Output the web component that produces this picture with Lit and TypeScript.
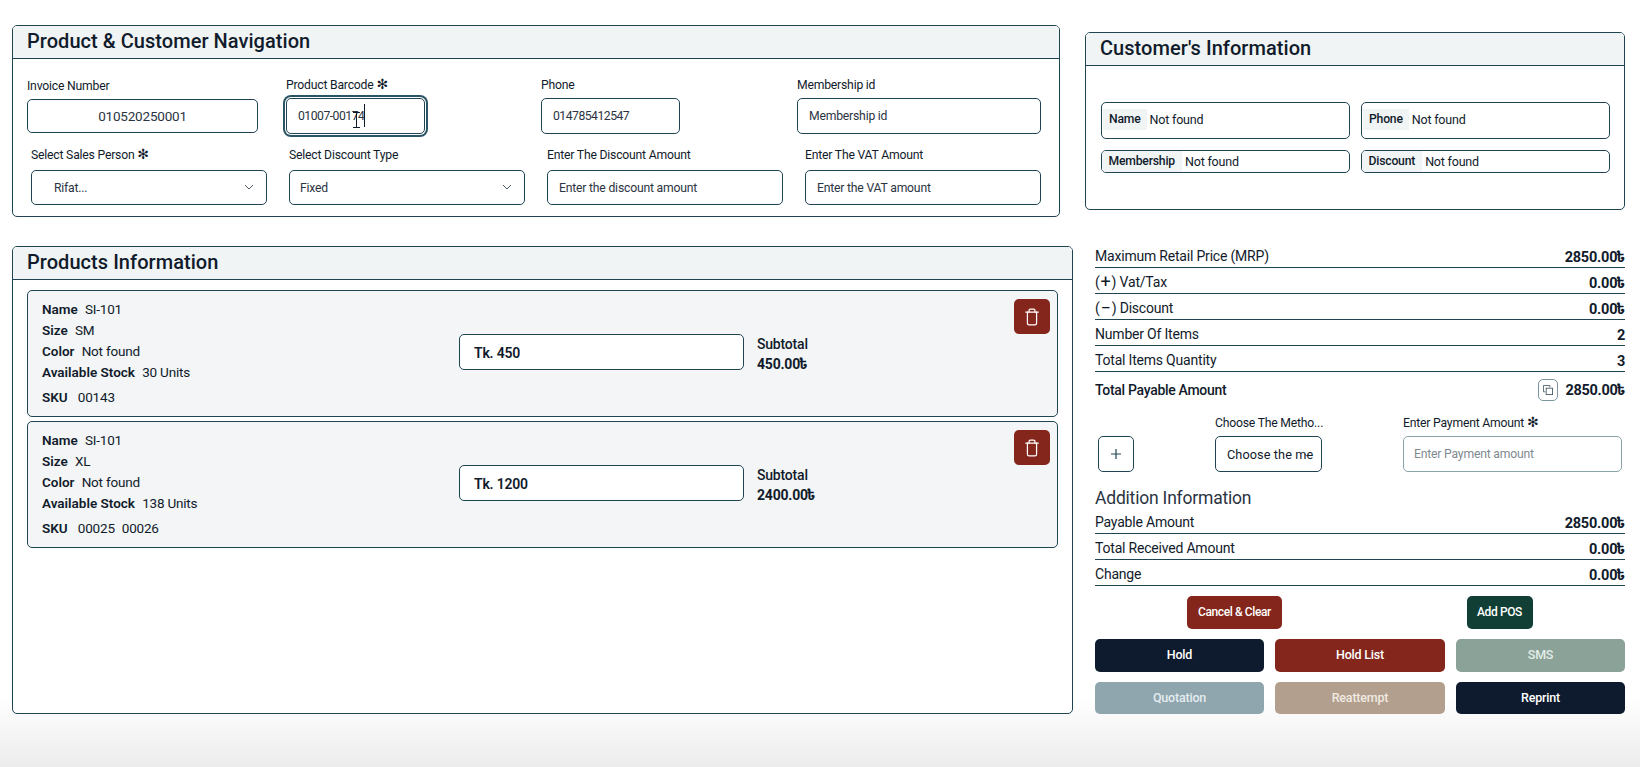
import { LitElement, html, css } from 'lit';
import { customElement } from 'lit/decorators.js';

const TAKA = '৳';

const summaryRows = [
  { label: html`Maximum Retail Price (MRP)`, value: '2850.00', money: true },
  { label: html`<span class="sign">(<b>+</b>)</span> Vat/Tax`, value: '0.00', money: true },
  { label: html`<span class="sign">(<b>−</b>)</span> Discount`, value: '0.00', money: true },
  { label: html`Number Of Items`, value: '2', money: false },
  { label: html`Total Items Quantity`, value: '3', money: false },
];

const additionRows = [
  { label: 'Payable Amount', value: '2850.00' },
  { label: 'Total Received Amount', value: '0.00' },
  { label: 'Change', value: '0.00' },
];

const products = [
  { size: 'SM', stock: '30 Units', sku: ['00143'], price: 'Tk. 450', subtotal: '450.00' },
  { size: 'XL', stock: '138 Units', sku: ['00025', '00026'], price: 'Tk. 1200', subtotal: '2400.00' },
];

@customElement('app-root')
export class AppRoot extends LitElement {
  static styles = css`
    :host {
      background: linear-gradient(to bottom, #ffffff 91%, #ececec 100%);
      box-sizing: border-box;
      color: #111b2b;
      display: flex;
      font-family: Roboto, 'Noto Sans', sans-serif;
      font-size: 13px;
      height: 767px;
      letter-spacing: -0.2px;
      overflow: hidden;
      padding: 25px 15px 0 12px;
    }

    * {
      box-sizing: border-box;
    }

    input,
    select,
    button {
      font: inherit;
      letter-spacing: inherit;
    }

    .left {
      display: flex;
      flex-direction: column;
      gap: 29px;
      width: 1061px;
    }

    .right {
      display: flex;
      flex-direction: column;
      margin-left: 12px;
      padding-top: 7px;
      width: 540px;
    }

    .panel {
      background: #ffffff;
      border: 1px solid #1f4553;
      border-radius: 5px;
      overflow: hidden;
    }

    .panel h2 {
      background: #f0f4f5;
      border-bottom: 1px solid #1f4553;
      font-size: 20px;
      font-weight: 500;
      height: 33px;
      letter-spacing: 0.05px;
      line-height: 30px;
      margin: 0;
      padding-left: 14px;
    }

    .nav {
      width: 1048px;
    }

    .nav-body {
      padding: 18px 17px 11px 14px;
    }

    .row-top {
      display: grid;
      gap: 14px;
      grid-template-columns: 243px 243px 242px 244px;
    }

    .row-bottom {
      display: grid;
      gap: 22px;
      grid-template-columns: repeat(4, 236px);
      margin-top: 13px;
      padding-left: 4px;
    }

    .field label {
      display: block;
      font-size: 12.2px;
      height: 16px;
      line-height: 16px;
      white-space: nowrap;
    }

    .row-top .field input {
      height: 36px;
      margin-top: 5px;
    }

    .row-bottom .field input,
    .row-bottom .select-wrap {
      height: 35px;
      margin-top: 7px;
    }

    .star {
      font-family: 'DejaVu Sans', sans-serif;
      font-size: 14px;
      font-weight: 700;
      line-height: 0;
    }

    input {
      background: #ffffff;
      border: 1px solid #1f4553;
      border-radius: 5px;
      color: #2b3442;
      display: block;
      font-size: 12.2px;
      outline: none;
      padding: 0 11px;
      width: 100%;
    }

    input::placeholder {
      color: #2b3442;
      opacity: 1;
    }

    .invoice {
      padding-top: 1px;
    }

    .invoice input {
      font-size: 13.5px;
      height: 34px !important;
      text-align: center;
      width: 231px;
    }

    .barcode {
      padding-left: 2px;
      position: relative;
    }

    .barcode input {
      box-shadow: 0 0 0 1px #ffffff, 0 0 0 3px #2a5566;
      letter-spacing: -0.5px;
      width: 139px;
    }

    .caret {
      background: #111b2b;
      height: 23px;
      left: 80px;
      position: absolute;
      top: 27px;
      width: 1px;
    }

    .ibeam {
      height: 16px;
      left: 68px;
      position: absolute;
      top: 35px;
      width: 9px;
    }

    .phone input {
      letter-spacing: -0.5px;
      width: 139px;
    }

    .select-wrap {
      position: relative;
    }

    select {
      appearance: none;
      background: #ffffff;
      border: 1px solid #1f4553;
      border-radius: 5px;
      color: #2b3442;
      display: block;
      font-size: 12.2px;
      height: 100%;
      outline: none;
      padding: 0 10px;
      width: 100%;
    }

    select.indented {
      padding-left: 22px;
    }

    .chevron {
      height: 10px;
      position: absolute;
      right: 13px;
      top: 12px;
      width: 10px;
    }

    .products {
      height: 468px;
      padding-bottom: 0;
    }

    .product-list {
      display: flex;
      flex-direction: column;
      gap: 4px;
      padding: 10px 14px 0;
    }

    .product {
      align-items: center;
      background: #f3f5f6;
      border: 1px solid #1f4553;
      border-radius: 5px;
      display: flex;
      height: 127px;
      padding: 8px 7px 0 14px;
    }

    .product-info {
      align-self: flex-start;
      flex: none;
      font-size: 13.5px;
      width: 417px;
    }

    .product-info div {
      height: 21px;
      line-height: 21px;
      white-space: nowrap;
    }

    .product-info b {
      font-weight: 600;
      letter-spacing: 0;
      margin-right: 4px;
    }

    .product-info .sku {
      margin-top: 4px;
    }

    .sku span {
      margin-left: 3px;
      margin-right: 4px;
    }

    .price {
      color: #111b2b;
      flex: none;
      font-size: 14px;
      font-weight: 600;
      height: 36px;
      margin-top: -11px;
      padding: 2px 14px 0;
      width: 285px;
    }

    .subtotal {
      flex: 1;
      font-size: 14px;
      font-weight: 500;
      line-height: 20px;
      margin-left: 13px;
      margin-top: -8px;
    }

    .subtotal b {
      display: block;
      font-weight: 700;
    }

    .taka {
      font-family: 'Noto Sans Bengali', 'Noto Sans', 'DejaVu Sans', sans-serif;
      line-height: 0;
      margin-left: -1px;
    }

    .delete {
      align-items: center;
      align-self: flex-start;
      background: #84261c;
      border: none;
      border-radius: 5px;
      display: flex;
      height: 35px;
      justify-content: center;
      margin-top: 0;
      padding: 0;
      width: 36px;
    }

    .delete svg {
      height: 20px;
      width: 20px;
    }

    .customer {
      width: 540px;
    }

    .customer-body {
      display: grid;
      gap: 11px;
      grid-template-columns: 249px 249px;
      grid-template-rows: 37px 23px;
      padding: 36px 14px 36px 15px;
    }

    .info-box {
      align-items: flex-start;
      border: 1px solid #1f4553;
      border-radius: 5px;
      display: flex;
      font-size: 12.5px;
      overflow: hidden;
    }

    .info-box span {
      line-height: 21px;
    }

    .info-box .chip {
      background: #f0f4f5;
      font-size: 12.2px;
      font-weight: 500;
      margin-left: 1px;
      margin-right: 3px;
      margin-top: 6px;
      padding: 0 6px;
    }

    .info-box.flat .chip {
      margin: 0 3px 0 0;
      padding: 0 7px 0 6.5px;
    }

    .info-box .value {
      margin-top: 6px;
    }

    .info-box.flat .value {
      margin-top: 0;
    }

    .summary {
      margin-left: 10px;
      margin-top: 32px;
      width: 530px;
    }

    .stat {
      align-items: center;
      border-bottom: 1px solid #1f4553;
      display: flex;
      font-size: 14px;
      height: 26px;
      justify-content: space-between;
      line-height: 20px;
      padding-top: 3px;
    }

    .stat strong,
    .total strong {
      font-size: 14.5px;
      font-weight: 700;
      line-height: 20px;
    }

    .stat strong {
      margin-top: 4px;
    }

    .total strong {
      margin-top: 2px;
    }

    .sign b {
      font-size: 18px;
      font-weight: 400;
      line-height: 0;
      margin: 0 1px;
      vertical-align: -1px;
    }

    .total {
      align-items: center;
      display: flex;
      font-size: 14px;
      font-weight: 500;
      height: 22px;
      letter-spacing: -0.3px;
      margin-top: 7px;
    }

    .total span:first-child {
      flex: 1;
    }

    .copy {
      align-items: center;
      background: #ffffff;
      border: 1px solid #7d959e;
      border-radius: 5px;
      display: flex;
      height: 22px;
      justify-content: center;
      margin-right: 7px;
      padding: 0;
      width: 20px;
    }

    .copy svg {
      height: 10px;
      width: 10px;
    }

    .payment {
      align-items: end;
      display: grid;
      grid-template-columns: 117px 188px 1fr;
      margin-top: 14px;
      padding: 0 3px;
    }

    .plus {
      align-items: center;
      background: #ffffff;
      border: 1px solid #1f4553;
      border-radius: 5px;
      display: flex;
      height: 36px;
      justify-content: center;
      padding: 0;
      width: 36px;
    }

    .plus svg {
      height: 12px;
      width: 12px;
    }

    .payment label {
      display: block;
      font-size: 12.2px;
      height: 16px;
      line-height: 16px;
      margin-bottom: 5px;
      white-space: nowrap;
    }

    .method {
      height: 36px;
      position: relative;
      width: 107px;
    }

    .method select {
      color: #111b2b;
      font-size: 12.7px;
      letter-spacing: 0.1px;
      padding: 0 4px 0 11px;
    }

    .method svg {
      height: 4px;
      position: absolute;
      right: 13px;
      top: 17px;
      width: 5px;
    }

    .payment input {
      border-color: #8aa3a9;
      height: 36px;
      padding: 0 10px;
    }

    .payment input::placeholder {
      color: #7f8a90;
    }

    h3 {
      color: #2b3442;
      font-size: 17.5px;
      font-weight: 400;
      height: 20px;
      line-height: 20px;
      margin: 16px 0 0;
    }

    .actions {
      display: grid;
      grid-template-columns: 279px 251px;
      justify-items: center;
      margin-top: 10px;
    }

    button.solid {
      border: none;
      border-radius: 5px;
      color: #ffffff;
      font-size: 12.5px;
      font-weight: 500;
      padding: 0 0 2px;
    }

    .actions button {
      font-size: 12px !important;
      height: 33px;
      letter-spacing: -0.4px;
    }

    .cancel {
      width: 95px;
    }

    .add-pos {
      width: 66px;
    }

    .grid-buttons {
      display: grid;
      gap: 10px 11px;
      grid-template-columns: 169px 170px 169px;
      grid-template-rows: 33px 32px;
      margin-top: 10px;
    }

    .navy {
      background: #0e1a2d;
    }

    .red {
      background: #84261c;
    }

    .green {
      background: #123f35;
    }

    .sage {
      background: #8aa298;
      color: #e4ece8 !important;
    }

    .slate {
      background: #8fa6ae;
      color: #e4ecef !important;
    }

    .sand {
      background: #b29f8d;
      color: #f0e9e2 !important;
    }
  `;

  money(value: string) {
    return html`${value}<span class="taka">${TAKA}</span>`;
  }

  chevron() {
    return html`<svg class="chevron" viewBox="0 0 10 10" fill="none" stroke="#4a5a66" stroke-width="1">
      <path d="M1 3l4 4 4-4" />
    </svg>`;
  }

  buildProducts() {
    return products.map(
      item => html`<div class="product">
        <div class="product-info">
          <div><b>Name</b> SI-101</div>
          <div><b>Size</b> ${item.size}</div>
          <div><b>Color</b> Not found</div>
          <div><b>Available Stock</b> ${item.stock}</div>
          <div class="sku"><b>SKU</b> ${item.sku.map(code => html`<span>${code}</span>`)}</div>
        </div>
        <input class="price" .value=${item.price} />
        <div class="subtotal">Subtotal<b>${this.money(item.subtotal)}</b></div>
        <button class="delete" aria-label="Delete">
          <svg viewBox="0 0 24 24" fill="none" stroke="#ffffff" stroke-width="1.5" stroke-linecap="round" stroke-linejoin="round">
            <path d="M4.5 6h15" />
            <path d="M8.5 6V4a1.5 1.5 0 0 1 1.5-1.5h4A1.5 1.5 0 0 1 15.5 4v2" />
            <path d="M6.5 6v13.5a2 2 0 0 0 2 2h7a2 2 0 0 0 2-2V6" />
          </svg>
        </button>
      </div>`
    );
  }

  render() {
    return html`
      <div class="left">
        <section class="panel nav">
          <h2>Product &amp; Customer Navigation</h2>
          <div class="nav-body">
            <div class="row-top">
              <div class="field invoice">
                <label>Invoice Number</label>
                <input .value=${'010520250001'} />
              </div>
              <div class="field barcode">
                <label>Product Barcode <span class="star">✻</span></label>
                <input .value=${'01007-00174'} />
                <span class="caret"></span>
                <svg class="ibeam" viewBox="0 0 9 16" fill="none" stroke="#111b2b" stroke-width="1">
                  <path d="M1 .5h7M4.5.5v15M1 15.5h7" />
                </svg>
              </div>
              <div class="field phone">
                <label>Phone</label>
                <input .value=${'014785412547'} />
              </div>
              <div class="field">
                <label>Membership id</label>
                <input placeholder="Membership id" />
              </div>
            </div>
            <div class="row-bottom">
              <div class="field">
                <label>Select Sales Person <span class="star">✻</span></label>
                <div class="select-wrap">
                  <select class="indented"><option>Rifat...</option></select>
                  ${this.chevron()}
                </div>
              </div>
              <div class="field">
                <label>Select Discount Type</label>
                <div class="select-wrap">
                  <select><option>Fixed</option></select>
                  ${this.chevron()}
                </div>
              </div>
              <div class="field">
                <label>Enter The Discount Amount</label>
                <input placeholder="Enter the discount amount" />
              </div>
              <div class="field">
                <label>Enter The VAT Amount</label>
                <input placeholder="Enter the VAT amount" />
              </div>
            </div>
          </div>
        </section>

        <section class="panel products">
          <h2>Products Information</h2>
          <div class="product-list">${this.buildProducts()}</div>
        </section>
      </div>

      <div class="right">
        <section class="panel customer">
          <h2>Customer's Information</h2>
          <div class="customer-body">
            <div class="info-box"><span class="chip">Name</span><span class="value">Not found</span></div>
            <div class="info-box"><span class="chip">Phone</span><span class="value">Not found</span></div>
            <div class="info-box flat"><span class="chip">Membership</span><span class="value">Not found</span></div>
            <div class="info-box flat"><span class="chip">Discount</span><span class="value">Not found</span></div>
          </div>
        </section>

        <div class="summary">
          ${summaryRows.map(
            row => html`<div class="stat">
              <span>${row.label}</span>
              <strong>${row.money ? this.money(row.value) : row.value}</strong>
            </div>`
          )}
          <div class="total">
            <span>Total Payable Amount</span>
            <button class="copy" aria-label="Copy">
              <svg viewBox="0 0 11 11" fill="none" stroke="#4a5f6a" stroke-width="1">
                <path d="M7.5 2.5v-2h-7v7h2" />
                <rect x="3.5" y="3.5" width="7" height="7" />
              </svg>
            </button>
            <strong>${this.money('2850.00')}</strong>
          </div>

          <div class="payment">
            <button class="plus" aria-label="Add">
              <svg viewBox="0 0 12 12" fill="none" stroke="#1f4553" stroke-width="1.2">
                <path d="M6 1v10M1 6h10" />
              </svg>
            </button>
            <div>
              <label>Choose The Metho...</label>
              <div class="method">
                <select><option>Choose the me</option></select>
                <svg viewBox="0 0 5 4" fill="none" stroke="#2b3442" stroke-width=".9"><path d="M.5 1l2 2 2-2" /></svg>
              </div>
            </div>
            <div>
              <label>Enter Payment Amount <span class="star">✻</span></label>
              <input placeholder="Enter Payment amount" />
            </div>
          </div>

          <h3>Addition Information</h3>
          ${additionRows.map(
            row => html`<div class="stat">
              <span>${row.label}</span>
              <strong>${this.money(row.value)}</strong>
            </div>`
          )}

          <div class="actions">
            <button class="solid red cancel">Cancel &amp; Clear</button>
            <button class="solid green add-pos">Add POS</button>
          </div>

          <div class="grid-buttons">
            <button class="solid navy">Hold</button>
            <button class="solid red">Hold List</button>
            <button class="solid sage">SMS</button>
            <button class="solid slate">Quotation</button>
            <button class="solid sand">Reattempt</button>
            <button class="solid navy">Reprint</button>
          </div>
        </div>
      </div>
    `;
  }
}
